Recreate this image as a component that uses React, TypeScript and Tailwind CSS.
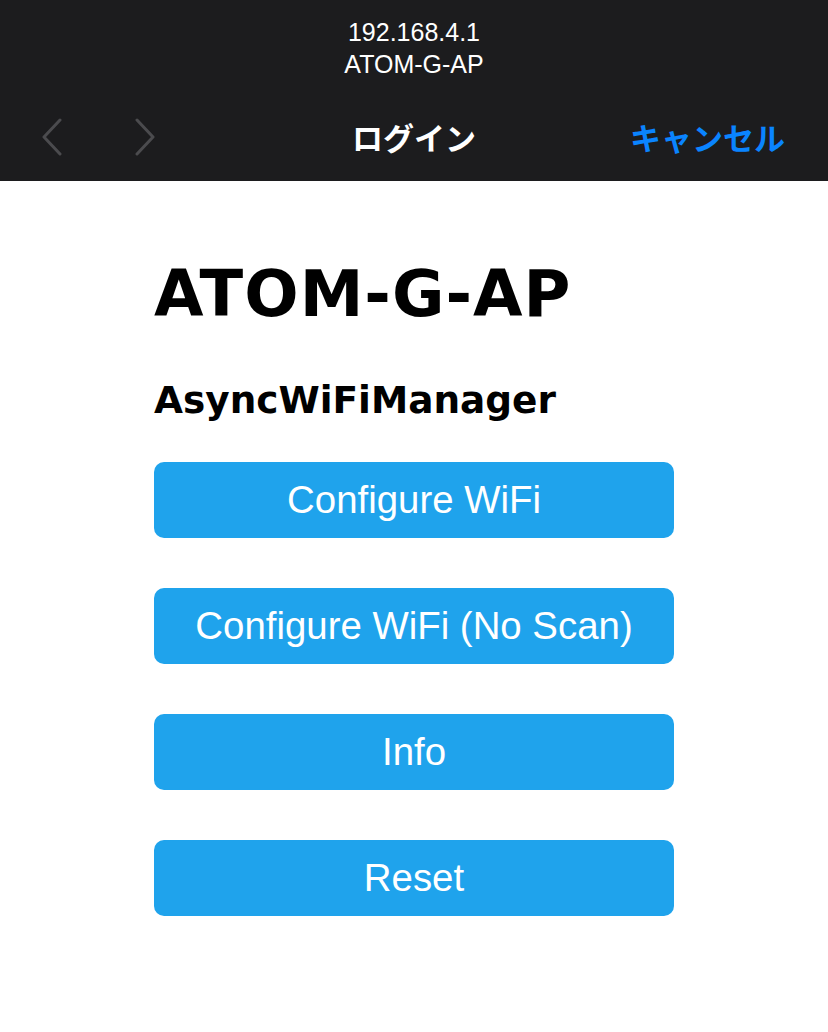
const buttons = ["Configure WiFi", "Configure WiFi (No Scan)", "Info", "Reset"];

const Chevron = ({ dir }: { dir: "left" | "right" }) => (
  <svg width="22" height="38" viewBox="0 0 22 38" fill="none">
    <path
      d={dir === "left" ? "M19 2 L3 19 L19 36" : "M3 2 L19 19 L3 36"}
      stroke="#4b4b4e"
      strokeWidth="3"
      strokeLinecap="round"
      strokeLinejoin="round"
    />
  </svg>
);

export default function App() {
  return (
    <div className="w-[828px] h-[1032px] bg-white">
      <header className="h-[181px] bg-[#1c1c1e] flex flex-col">
        <div className="flex flex-col items-center pt-[16px] text-white font-['Liberation_Sans',Roboto,sans-serif] text-[25px] leading-[32px]">
          <span>192.168.4.1</span>
          <span>ATOM-G-AP</span>
        </div>
        <div className="relative flex items-center h-[40px] mt-[37px]">
          <div className="flex items-center gap-[71px] pl-[41px]">
            <Chevron dir="left" />
            <Chevron dir="right" />
          </div>
          <span className="absolute left-1/2 -translate-x-1/2 text-white font-bold text-[31px] font-['Noto_Sans_CJK_JP',sans-serif]">
            ログイン
          </span>
          <span className="ml-auto pr-[43px] text-[#0a84ff] font-bold text-[31px] font-['Noto_Sans_CJK_JP',sans-serif]">
            キャンセル
          </span>
        </div>
      </header>

      <main className="w-[520px] mx-auto font-['DejaVu_Sans',Verdana,sans-serif]">
        <h1 className="mt-[76px] text-[64px] leading-[74px] font-bold tracking-[1px] text-black">ATOM-G-AP</h1>
        <h3 className="mt-[47px] text-[37.44px] leading-[44px] font-bold text-black">AsyncWiFiManager</h3>
        <div className="mt-[40px] flex flex-col gap-[50px]">
          {buttons.map((b) => (
            <button
              key={b}
              className="w-full h-[76px] rounded-[10px] bg-[#1fa3ec] text-white text-[38.4px] font-['Liberation_Sans',Arial,sans-serif]"
            >
              {b}
            </button>
          ))}
        </div>
      </main>
    </div>
  );
}
